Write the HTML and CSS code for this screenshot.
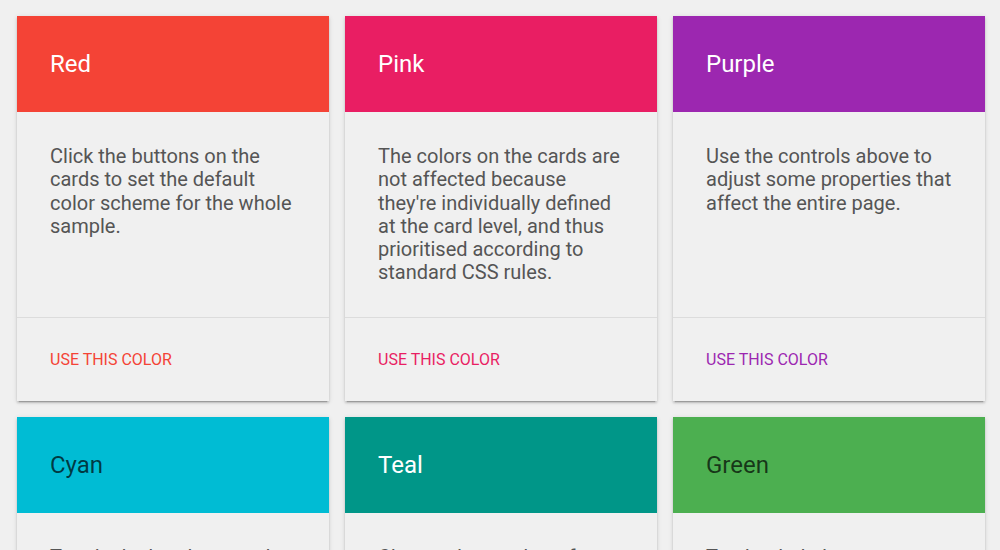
FILE: index.html
```html
<!DOCTYPE html>
<html>
<head>
<meta charset="utf-8">
<link rel="stylesheet" href="styles.css">
</head>
<body>
<div class="grid">
  <div class="card">
    <div class="head red"><h2>Red</h2></div>
    <div class="body">Click the buttons on the cards to set the default color scheme for the whole sample.</div>
    <div class="actions"><span class="btn t-red">USE THIS COLOR</span></div>
  </div>
  <div class="card">
    <div class="head pink"><h2>Pink</h2></div>
    <div class="body">The colors on the cards are not affected because they're individually defined at the card level, and thus prioritised according to standard CSS rules.</div>
    <div class="actions"><span class="btn t-pink">USE THIS COLOR</span></div>
  </div>
  <div class="card">
    <div class="head purple"><h2>Purple</h2></div>
    <div class="body">Use the controls above to adjust some properties that affect the entire page.</div>
    <div class="actions"><span class="btn t-purple">USE THIS COLOR</span></div>
  </div>
  <div class="card">
    <div class="head cyan dark"><h2>Cyan</h2></div>
    <div class="body">Toggle the header to make it fixed or scrolling with the page.</div>
    <div class="actions"><span class="btn t-cyan">USE THIS COLOR</span></div>
  </div>
  <div class="card">
    <div class="head teal"><h2>Teal</h2></div>
    <div class="body">Change the number of columns to see the layout adapt.</div>
    <div class="actions"><span class="btn t-teal">USE THIS COLOR</span></div>
  </div>
  <div class="card">
    <div class="head green dark"><h2>Green</h2></div>
    <div class="body">Try the dark theme to see how the cards look.</div>
    <div class="actions"><span class="btn t-green">USE THIS COLOR</span></div>
  </div>
</div>
</body>
</html>
```
FILE: styles.css
```css
html, body {
  margin: 0;
  padding: 0;
  background: #f0f0f0;
  font-family: Roboto, "Liberation Sans", sans-serif;
  overflow: hidden;
}
.grid {
  display: grid;
  grid-template-columns: repeat(3, 312px);
  column-gap: 16px;
  row-gap: 16px;
  padding: 16px 0 0 17px;
}
.card {
  display: flex;
  flex-direction: column;
  background: #f0f0f0;
  box-shadow: 0 2px 2px 0 rgba(0,0,0,.14), 0 3px 1px -2px rgba(0,0,0,.2), 0 1px 5px 0 rgba(0,0,0,.12);
}
.head {
  height: 96px;
  display: flex;
  align-items: center;
  padding: 0 33px;
  color: #fff;
}
.head h2 {
  margin: 0;
  font-size: 24px;
  font-weight: 400;
  line-height: 28px;
}
.head.dark { color: rgba(0,0,0,.7); }
.red { background: #f44336; }
.pink { background: #e91e63; }
.purple { background: #9c27b0; }
.cyan { background: #00bcd4; }
.teal { background: #009688; }
.green { background: #4caf50; }
.body {
  flex: 1;
  padding: 33px 33px 32px 33px;
  font-size: 20px;
  line-height: 23.3px;
  color: #555;
}
.actions {
  border-top: 1px solid #dcdcdc;
  padding: 33px 33px 32px 33px;
  height: 18px;
  display: flex;
  align-items: center;
}
.btn {
  font-size: 16px;
  line-height: 18px;
}
.t-red { color: #f44336; }
.t-pink { color: #e91e63; }
.t-purple { color: #9c27b0; }
.t-cyan { color: #00bcd4; }
.t-teal { color: #009688; }
.t-green { color: #4caf50; }
```
